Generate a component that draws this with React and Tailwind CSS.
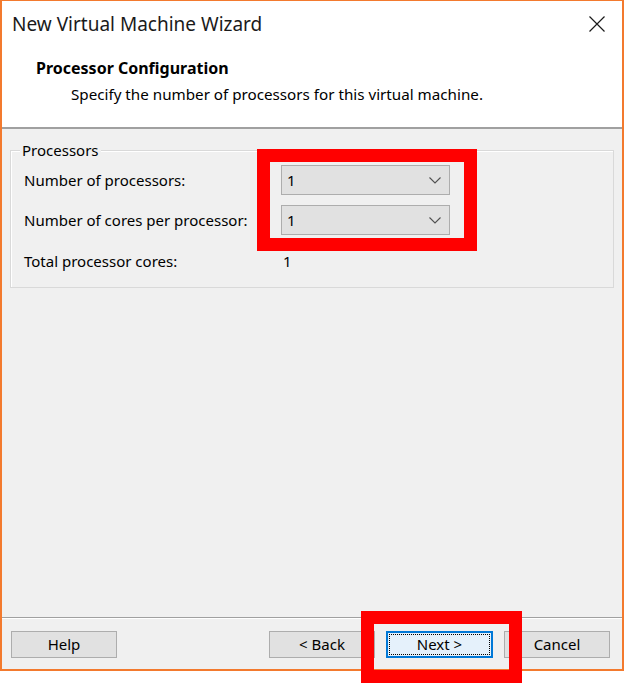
const font = { fontFamily: '"Segoe UI", "Noto Sans", "Liberation Sans", sans-serif' }

function Chevron() {
  return (
    <svg width="12" height="7" viewBox="0 0 12 7" className="shrink-0">
      <polyline points="0.5,0.5 6,6 11.5,0.5" fill="none" stroke="#505050" strokeWidth="1.1" />
    </svg>
  )
}

function CloseIcon() {
  return (
    <svg width="16" height="16" viewBox="0 0 16 16">
      <path d="M0.5 0.5 L15.5 15.5 M15.5 0.5 L0.5 15.5" stroke="#1a1a1a" strokeWidth="1.2" fill="none" />
    </svg>
  )
}

function Select({ value }) {
  return (
    <div className="flex items-center justify-between w-[169px] h-[30px] bg-[#e1e1e1] border border-[#adadad] pl-[5px] pr-[8px]">
      <span>{value}</span>
      <Chevron />
    </div>
  )
}

function Button({ children, focused = false }) {
  if (focused) {
    return (
      <div className="w-[107px] h-[27px] border-2 border-[#0078d7] bg-[#e5f1fb] p-[1px]">
        <div className="w-full h-full border border-dotted border-black flex items-center justify-center">
          {children}
        </div>
      </div>
    )
  }
  return (
    <div className="w-[106px] h-[27px] border border-[#adadad] bg-[#e1e1e1] flex items-center justify-center">
      {children}
    </div>
  )
}

export default function App() {
  return (
    <div className="relative w-[624px] h-[683px] bg-white text-[15px] text-black" style={font}>
      <div className="flex flex-col w-[624px] h-[671px] border-t border-x-2 border-b-2 border-[#f37a2e]">
        {/* header */}
        <div className="bg-white h-[126px] shrink-0">
          <div className="flex items-center justify-between h-[46px] pl-[10px] pr-[17px]">
            <span className="text-[19px] text-[#1a1a1a]">New Virtual Machine Wizard</span>
            <CloseIcon />
          </div>
          <div className="pl-[34px] pt-[11px] text-[16px] font-bold leading-[20px]">Processor Configuration</div>
          <div className="pl-[69px] pt-[6px] text-[15.2px] leading-[20px]">Specify the number of processors for this virtual machine.</div>
        </div>
        <div className="h-[2px] bg-[#a0a0a0] shrink-0" />

        {/* body */}
        <div className="flex-1 bg-[#f0f0f0] px-[8px] pt-[21px]">
          <div className="relative border border-[#d9d9d9] shadow-[inset_1px_1px_0_#fff] pl-[13px] pt-[14px] pb-[16px]">
            <span className="absolute -top-[11px] left-[9px] px-[2px] bg-[#f0f0f0] leading-[20px]">Processors</span>
            <div className="flex items-center">
              <span className="w-[257px]">Number of processors:</span>
              <Select value="1" />
            </div>
            <div className="flex items-center mt-[10px]">
              <span className="w-[257px]">Number of cores per processor:</span>
              <Select value="1" />
            </div>
            <div className="flex items-center mt-[16px] leading-[20px]">
              <span className="w-[259px]">Total processor cores:</span>
              <span>1</span>
            </div>
          </div>
        </div>

        {/* footer */}
        <div className="h-px bg-[#a0a0a0] shrink-0" />
        <div className="h-px bg-white shrink-0" />
        <div className="flex items-start bg-[#f0f0f0] h-[50px] shrink-0 pl-[9px] pr-[12px] pt-[12px]">
          <Button>Help</Button>
          <div className="flex-1" />
          <Button>&lt; Back</Button>
          <div className="w-[11px]" />
          <Button focused>Next &gt;</Button>
          <div className="w-[11px]" />
          <Button>Cancel</Button>
        </div>
      </div>

      {/* red annotation boxes */}
      <div className="absolute left-[257px] top-[149px] w-[220px] h-[102px] border-[13px] border-[#ff0000]" />
      <div className="absolute left-[361px] top-[611px] w-[161px] h-[72px] border-[13px] border-[#ff0000]" />
    </div>
  )
}
